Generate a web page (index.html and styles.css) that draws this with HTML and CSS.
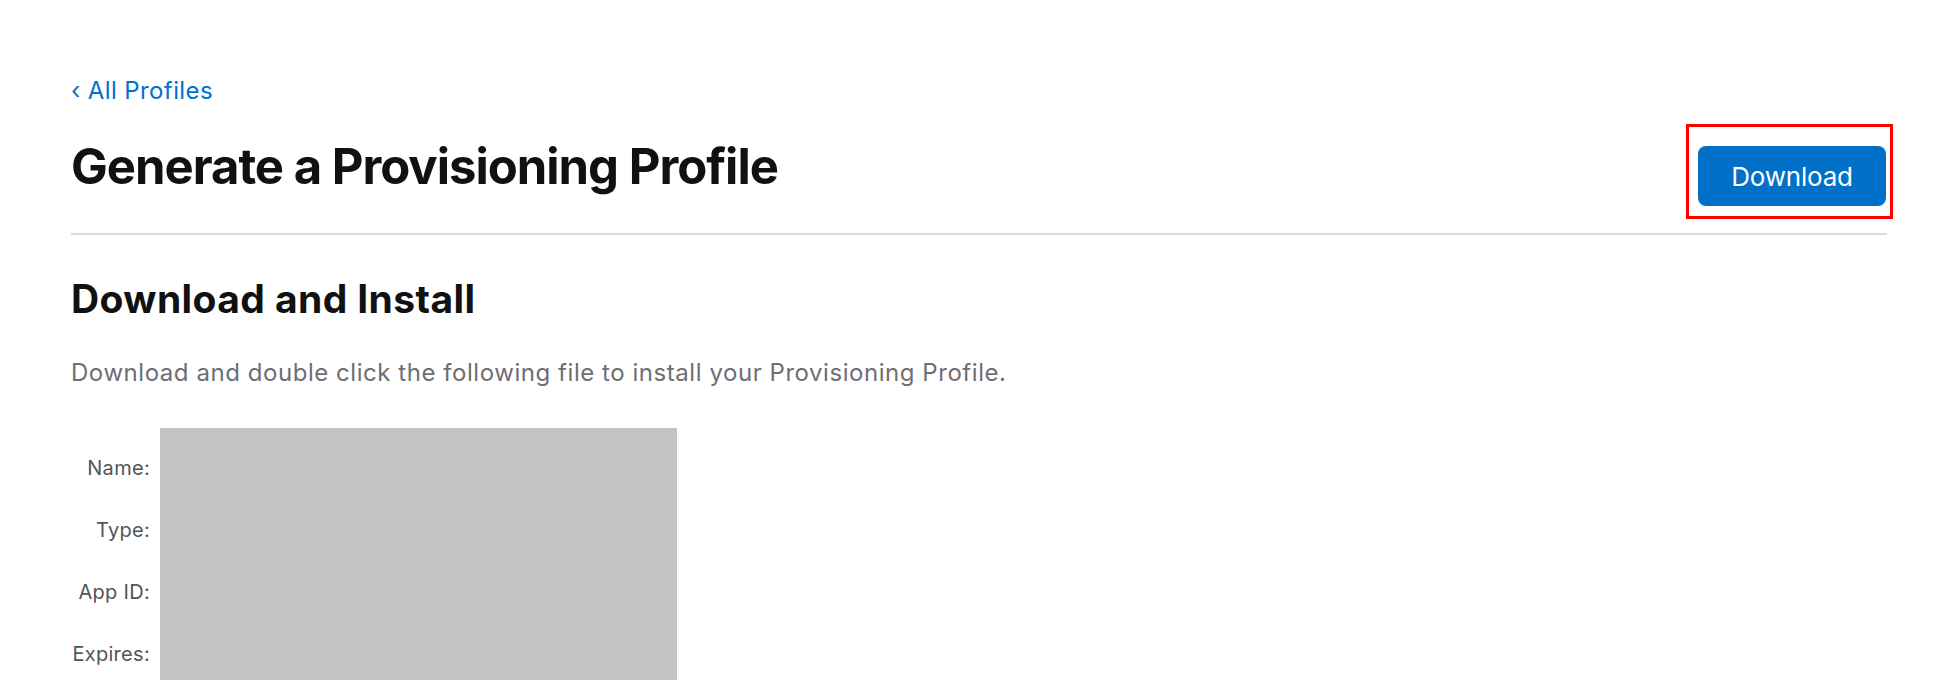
FILE: index.html
```html
<!DOCTYPE html>
<html lang="en">
<head>
<meta charset="utf-8">
<title>Generate a Provisioning Profile</title>
<link rel="stylesheet" href="styles.css">
</head>
<body>
<main class="page">
  <a class="back" href="#"><span class="chev">‹</span> All Profiles</a>
  <header class="title-row">
    <h1 class="title">Generate a Provisioning Profile</h1>
    <div class="highlight"><button class="btn" type="button">Download</button></div>
  </header>
  <section class="install">
    <h2 class="subtitle">Download and Install</h2>
    <p class="lead">Download and double click the following file to install your Provisioning Profile.</p>
    <div class="details">
      <div class="labels">
        <div class="label">Name:</div>
        <div class="label">Type:</div>
        <div class="label">App ID:</div>
        <div class="label">Expires:</div>
      </div>
      <div class="redacted"></div>
    </div>
  </section>
</main>
</body>
</html>
```

FILE: styles.css
```css
html, body {
  margin: 0;
  padding: 0;
  background: #fff;
}
body {
  font-family: Inter, "Noto Sans", "Liberation Sans", sans-serif;
  color: #1d1d1f;
}
.page {
  padding: 76px 63px 0 71px;
}
.back {
  display: block;
  font-size: 24px;
  line-height: 30px;
  letter-spacing: 0.4px;
  color: #0070c9;
  text-decoration: none;
}
.chev {
  font-size: 24px;
}
.title-row {
  display: flex;
  justify-content: space-between;
  align-items: flex-start;
  padding-bottom: 14px;
  border-bottom: 2px solid #dadada;
}
.title {
  margin: 31px 0 0;
  font-size: 49px;
  line-height: 60px;
  font-weight: 700;
  color: #111;
  letter-spacing: -1px;
}
.highlight {
  margin: 18px -6px 0 0;
  border: 3px solid #ff0000;
  padding: 19px 4px 10px 9px;
}
.btn {
  display: block;
  width: 188px;
  height: 60px;
  border: 0;
  border-radius: 8px;
  background: #0070c9;
  color: #fff;
  font-family: inherit;
  font-size: 26px;
  letter-spacing: -0.2px;
  padding: 0;
}
.subtitle {
  margin: 40px 0 0;
  font-size: 39px;
  line-height: 48px;
  font-weight: 700;
  letter-spacing: 0.4px;
  color: #111;
}
.lead {
  margin: 35px 0 0;
  font-size: 24px;
  line-height: 30px;
  letter-spacing: 0.55px;
  color: #6e6e73;
}
.details {
  display: flex;
  gap: 10px;
  margin-top: 40px;
}
.labels {
  width: 79px;
  padding-top: 9px;
  text-align: right;
}
.label {
  font-size: 20px;
  line-height: 62px;
  letter-spacing: 0.3px;
  color: #555;
  white-space: nowrap;
}
.redacted {
  width: 517px;
  height: 252px;
  background: #c3c3c3;
}
```
